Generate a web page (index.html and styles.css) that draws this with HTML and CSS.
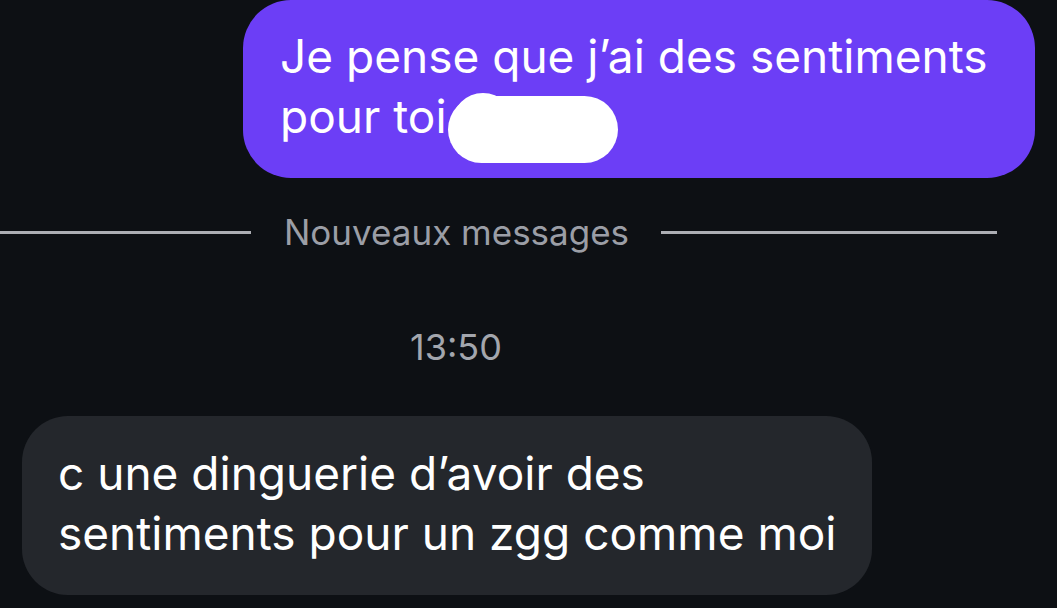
FILE: index.html
```html
<!DOCTYPE html>
<html lang="fr">
<head>
<meta charset="utf-8">
<title>Messages</title>
<link rel="stylesheet" href="styles.css">
</head>
<body>
<main class="thread">
  <div class="row row-out">
    <div class="bubble bubble-out">Je pense que j’ai des sentiments pour toi<span class="redacted"></span></div>
  </div>

  <div class="divider">
    <span class="divider-line divider-line-left"></span>
    <span class="divider-label">Nouveaux messages</span>
    <span class="divider-line divider-line-right"></span>
  </div>

  <div class="timestamp">13:50</div>

  <div class="row row-in">
    <div class="bubble bubble-in">c une dinguerie d’avoir des sentiments pour un zgg comme moi</div>
  </div>
</main>
</body>
</html>
```

FILE: styles.css
```css
html, body {
  margin: 0;
  padding: 0;
  background: #0d1014;
  height: 100%;
  overflow: hidden;
}

body {
  font-family: Inter, "Noto Sans", sans-serif;
  color: #ffffff;
}

.thread {
  display: flex;
  flex-direction: column;
  width: 1057px;
}

.row {
  display: flex;
}

.row-out {
  justify-content: flex-end;
  padding-right: 22px;
}

.row-in {
  justify-content: flex-start;
  padding-left: 22px;
  margin-top: 49px;
}

.bubble {
  box-sizing: border-box;
  font-size: 46px;
  line-height: 60px;
}

.bubble-out {
  width: 792px;
  background: #6c3ef6;
  border-radius: 48px;
  padding: 26px 30px 32px 37px;
}

.bubble-in {
  width: 850px;
  background: #24272c;
  border-radius: 46px;
  padding: 27px 30px 32px 36px;
}

/* white hand-drawn pill hiding part of the sent text */
.redacted {
  position: relative;
  display: inline-block;
  width: 170px;
  height: 67px;
  margin: -8px 0 -17px 1px;
  border-radius: 34px;
  background: #ffffff;
  vertical-align: -13px;
}

.redacted::before {
  content: "";
  position: absolute;
  left: 4px;
  top: -3px;
  width: 62px;
  height: 62px;
  border-radius: 50%;
  background: #ffffff;
}

.divider {
  display: flex;
  align-items: center;
  width: 997px;
  margin-top: 34px;
  height: 40px;
}

.divider-line {
  height: 3px;
  background: #acaeb4;
}

.divider-line-left {
  flex: 0 0 251px;
}

.divider-line-right {
  flex: 1;
}

.divider-label {
  margin: 0 32px 0 33px;
  font-size: 35px;
  line-height: 40px;
  color: #9b9ea6;
  white-space: nowrap;
}

.timestamp {
  width: 912px;
  text-align: center;
  margin-top: 75px;
  font-size: 36px;
  line-height: 40px;
  color: #a3a6ad;
}
```
